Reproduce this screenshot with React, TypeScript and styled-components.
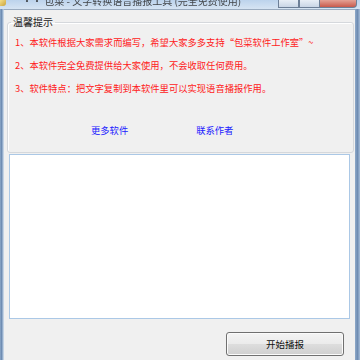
import React from "react";
import styled, { createGlobalStyle } from "styled-components";

const Global = createGlobalStyle`
  html, body { margin: 0; padding: 0; width: 360px; height: 360px; overflow: hidden; background: #f0f0f0; }
  * { box-sizing: border-box; }
`;

const CJK = `"Noto Sans CJK SC", "Liberation Sans", sans-serif`;

const Window = styled.div`
  width: 360px;
  height: 360px;
  display: flex;
  flex-direction: column;
  background: linear-gradient(180deg, #c6d9ee 0%, #b7cce5 100%);
  font-family: ${CJK};
`;

const TitleBar = styled.div`
  height: 9px;
  display: flex;
  align-items: flex-start;
  overflow: hidden;
  background: linear-gradient(180deg, #bcd3ec 0%, #d6e4f3 100%);
`;

const AppIcon = styled.div`
  width: 6px;
  height: 6px;
  background: linear-gradient(135deg, #f6e08a, #c9a23a);
  border-radius: 0 0 3px 0;
`;

const TitleText = styled.div`
  flex: 1;
  margin-left: 16px;
  margin-top: -5px;
  font-size: 10px;
  line-height: 12px;
  color: #2a2a2a;
  white-space: nowrap;
  opacity: 0.85;
  filter: blur(0.3px);
`;

const CaptionButtons = styled.div`
  display: flex;
  height: 8px;
  margin-right: 3px;
`;

const CaptionButton = styled.div<{ $w: number; $close?: boolean }>`
  width: ${(p) => p.$w}px;
  height: 8px;
  border: 1px solid #6d7f97;
  border-top: none;
  border-left-width: ${(p) => (p.$close ? 0 : 1)}px;
  background: ${(p) =>
    p.$close
      ? "linear-gradient(180deg, #e4a195 0%, #c85a4c 100%)"
      : "linear-gradient(180deg, #e8eef6 0%, #c9d6e6 100%)"};
  border-radius: ${(p) => (p.$close ? "0 0 4px 0" : "0")};
`;

const Body = styled.div`
  flex: 1;
  display: flex;
`;

const SideFrame = styled.div<{ $w: number }>`
  width: ${(p) => p.$w}px;
  background: linear-gradient(90deg, #8ea9c9 0%, #6f8db3 50%, #a7bdd8 100%);
`;

const Client = styled.div`
  flex: 1;
  background: #f0f0f0;
  border-top: 1px solid #9aabbf;
  border-left: 1px solid #c4d3e4;
  display: flex;
  flex-direction: column;
  padding: 0 1px 0 3px;
`;

const Group = styled.fieldset`
  margin: 5px 0 0 0;
  padding: 2px 0 10px 7px;
  border: 1px solid #d5d8dc;
  border-radius: 3px;
  box-shadow: inset 1px 1px 0 #ffffff;
  min-width: 0;
`;

const Legend = styled.legend`
  font-size: 10px;
  line-height: 14px;
  color: #1a1a1a;
  padding: 0 2px;
  margin-left: -4px;
`;

const Notice = styled.div`
  font-size: 9.3px;
  line-height: 23px;
  color: #ff2020;
  white-space: nowrap;
`;

const LinkRow = styled.div`
  display: flex;
  gap: 68px;
  padding-left: 76px;
  margin-top: 19px;
  line-height: 23px;
`;

const LinkText = styled.span`
  font-size: 9.3px;
  color: #2020ff;
  cursor: pointer;
`;

const TextArea = styled.textarea`
  margin: 1px 0 0 2px;
  width: 341px;
  height: 165px;
  border: 1px solid #abc8e6;
  background: #ffffff;
  resize: none;
  outline: none;
  font-family: ${CJK};
`;

const Footer = styled.div`
  display: flex;
  justify-content: flex-end;
  padding: 13px 10px 0 0;
`;

const Button = styled.button`
  width: 118px;
  height: 24px;
  border: 1px solid #707070;
  border-radius: 3px;
  background: linear-gradient(180deg, #f4f4f4 0%, #ebebeb 48%, #dddddd 52%, #cfcfcf 100%);
  box-shadow: inset 0 0 0 1px #fbfbfb;
  font-family: ${CJK};
  font-size: 9.5px;
  color: #111;
  padding: 0;
`;

export default function App() {
  return (
    <>
      <Global />
      <Window>
        <TitleBar>
          <AppIcon />
          <TitleText>·· 包菜 - 文字转换语音播报工具 (完全免费使用)</TitleText>
          <CaptionButtons>
            <CaptionButton $w={21} />
            <CaptionButton $w={21} />
            <CaptionButton $w={37} $close />
          </CaptionButtons>
        </TitleBar>
        <Body>
          <SideFrame $w={3} />
          <Client>
            <Group>
              <Legend>温馨提示</Legend>
              <Notice>1、本软件根据大家需求而编写，希望大家多多支持“包菜软件工作室”~</Notice>
              <Notice>2、本软件完全免费提供给大家使用，不会收取任何费用。</Notice>
              <Notice>3、软件特点：把文字复制到本软件里可以实现语音播报作用。</Notice>
              <LinkRow>
                <LinkText>更多软件</LinkText>
                <LinkText>联系作者</LinkText>
              </LinkRow>
            </Group>
            <TextArea />
            <Footer>
              <Button>开始播报</Button>
            </Footer>
          </Client>
          <SideFrame $w={5} />
        </Body>
      </Window>
    </>
  );
}
